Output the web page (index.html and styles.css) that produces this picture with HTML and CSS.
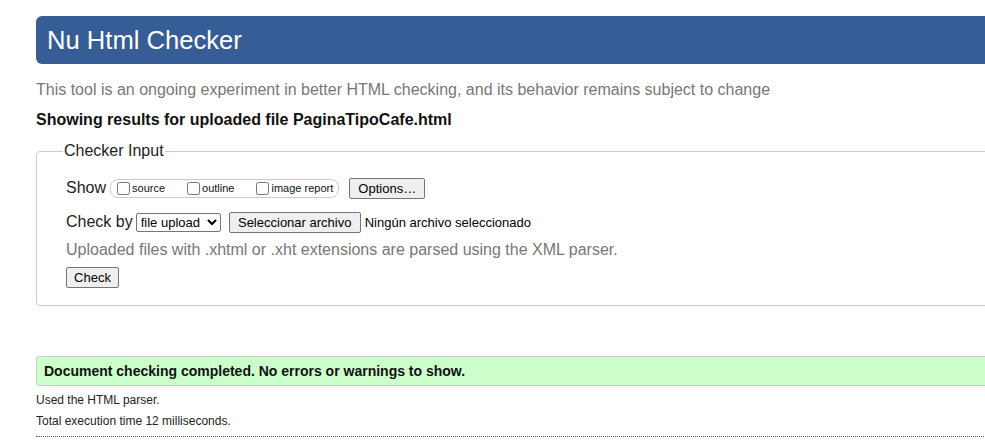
FILE: index.html
```html
<!DOCTYPE html>
<html lang="en">
<head>
<meta charset="utf-8">
<title>Nu Html Checker</title>
<link rel="stylesheet" href="styles.css">
</head>
<body>
<div class="page">
  <h1 class="banner">Nu Html Checker</h1>
  <p class="intro">This tool is an ongoing experiment in better HTML checking, and its behavior remains subject to change</p>
  <p class="showing">Showing results for uploaded file PaginaTipoCafe.html</p>
  <fieldset class="checker">
    <legend>Checker Input</legend>
    <div class="row show-row">
      <span class="lbl">Show</span>
      <span class="opts">
        <label class="opt"><input type="checkbox">source</label>
        <label class="opt"><input type="checkbox">outline</label>
        <label class="opt"><input type="checkbox">image report</label>
      </span>
      <button class="btn">Options…</button>
    </div>
    <div class="row by-row">
      <span class="lbl">Check by</span>
      <select class="sel"><option>file upload</option></select>
      <button class="btn file-btn">Seleccionar archivo</button>
      <span class="nofile">Ningún archivo seleccionado</span>
    </div>
    <p class="hint">Uploaded files with .xhtml or .xht extensions are parsed using the XML parser.</p>
    <button class="btn check-btn">Check</button>
  </fieldset>
  <div class="success">Document checking completed. No errors or warnings to show.</div>
  <p class="small">Used the HTML parser.</p>
  <p class="small">Total execution time 12 milliseconds.</p>
  <div class="dotted"></div>
</div>
</body>
</html>
```
FILE: styles.css
```css
html, body {
  margin: 0;
  padding: 0;
  background: #fff;
  overflow: hidden;
}
body {
  font-family: "Liberation Sans", Arial, sans-serif;
  color: #111;
}
.page {
  padding: 16px 0 0 36px;
  width: 1100px;
}
.banner {
  margin: 0;
  background: #365d95;
  color: #fff;
  font-weight: normal;
  font-size: 25.6px;
  height: 48px;
  line-height: 48px;
  padding-left: 11px;
  border-radius: 6px 0 0 6px;
}
.intro {
  margin: 15px 0 0;
  font-size: 16px;
  line-height: 22px;
  color: #777;
}
.showing {
  margin: 8px 0 0;
  font-size: 16px;
  font-weight: bold;
  line-height: 22px;
}
.checker {
  margin: 11px 0 0;
  border: 1px solid #ccc;
  border-radius: 4px;
  padding: 10px 0 17px 29px;
  min-width: 0;
}
.checker legend {
  font-size: 16px;
  padding: 0 1px;
  margin-left: -3px;
  color: #222;
}
.row {
  display: flex;
  align-items: center;
}
.lbl {
  font-size: 16px;
  color: #222;
}
.show-row {
  margin-top: 6px;
  height: 24px;
}
.opts {
  display: inline-flex;
  align-items: center;
  margin-left: 4px;
  border: 1px solid #ccc;
  border-radius: 8px;
  height: 17px;
  padding: 0 5px 0 3px;
}
.opt {
  display: inline-flex;
  align-items: center;
  font-size: 11px;
  margin-right: 19px;
}
.opt:last-child { margin-right: 0; }
.opt input {
  margin: 0 2px 0 3px;
  width: 13px;
  height: 13px;
}
.btn {
  font-family: "Liberation Sans", Arial, sans-serif;
  font-size: 13px;
  background: #efefef;
  border: 1px solid #767676;
  border-radius: 2px;
  color: #000;
  padding: 1px 6px;
  height: 21px;
}
.show-row .btn {
  margin-left: 10px;
  width: 76px;
}
.by-row {
  margin-top: 11px;
  height: 22px;
}
.sel {
  font-family: "Liberation Sans", Arial, sans-serif;
  font-size: 13px;
  margin-left: 3px;
  height: 19px;
  width: 85px;
  border: 1px solid #767676;
  border-radius: 2px;
  background: #fff;
  color: #000;
}
.file-btn {
  margin-left: 8px;
  width: 132px;
}
.nofile {
  font-size: 13px;
  margin-left: 4px;
  color: #000;
}
.hint {
  margin: 7px 0 0;
  font-size: 16px;
  line-height: 20px;
  color: #777;
}
.check-btn {
  margin-top: 7px;
  width: 53px;
}
.success {
  margin-top: 50px;
  background: #ccffcc;
  border: 1px solid #ccc;
  border-radius: 3px;
  height: 28px;
  line-height: 28px;
  padding-left: 7px;
  font-size: 14px;
  font-weight: bold;
}
.small {
  margin: 7px 0 0;
  font-size: 12px;
  line-height: 14px;
  color: #222;
}
.dotted {
  margin-top: 8px;
  border-top: 1px dotted #555;
}
```
